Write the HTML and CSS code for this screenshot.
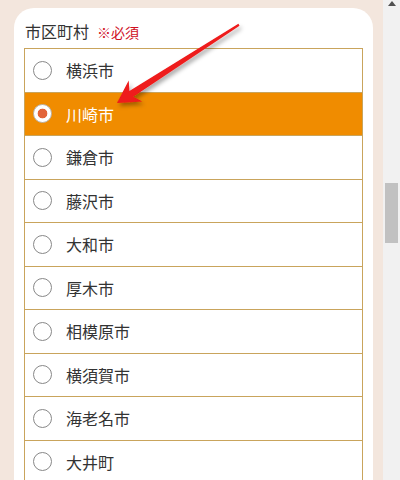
FILE: index.html
```html
<!DOCTYPE html>
<html lang="ja">
<head>
<meta charset="utf-8">
<title>市区町村</title>
<link rel="stylesheet" href="styles.css">
</head>
<body>
<div class="page">
  <main class="content">
    <div class="card">
      <div class="label">市区町村<span class="req">※必須</span></div>
      <ul class="options">
        <li class="option"><span class="radio"></span><span class="name">横浜市</span></li>
        <li class="option selected"><span class="radio checked"></span><span class="name">川崎市</span></li>
        <li class="option"><span class="radio"></span><span class="name">鎌倉市</span></li>
        <li class="option"><span class="radio"></span><span class="name">藤沢市</span></li>
        <li class="option"><span class="radio"></span><span class="name">大和市</span></li>
        <li class="option"><span class="radio"></span><span class="name">厚木市</span></li>
        <li class="option"><span class="radio"></span><span class="name">相模原市</span></li>
        <li class="option"><span class="radio"></span><span class="name">横須賀市</span></li>
        <li class="option"><span class="radio"></span><span class="name">海老名市</span></li>
        <li class="option"><span class="radio"></span><span class="name">大井町</span></li>
      </ul>
    </div>
  </main>
  <div class="scrollbar">
    <div class="scroll-btn"><span class="tri"></span></div>
    <div class="thumb"></div>
  </div>
</div>
<svg class="pointer" width="260" height="130" viewBox="0 0 260 130" xmlns="http://www.w3.org/2000/svg">
  <defs>
    <filter id="sh" x="-20%" y="-20%" width="140%" height="140%">
      <feDropShadow dx="2" dy="3" stdDeviation="2" flood-color="#000" flood-opacity="0.35"/>
    </filter>
  </defs>
  <polygon filter="url(#sh)" fill="#ee1a1a" points="117,103 142.3,101.6 133.2,96.7 239.5,25.8 238.4,23.8 129.4,90.9 128.7,80.6"/>
</svg>
</body>
</html>
```

FILE: styles.css
```css
html, body {
  margin: 0;
  padding: 0;
  height: 480px;
  overflow: hidden;
}

body {
  font-family: "Noto Sans CJK JP", "Noto Sans", sans-serif;
  color: #333;
  position: relative;
}

.page {
  display: flex;
  height: 480px;
}

.content {
  flex: 1;
  background: #f3e6dd;
  padding: 8px 10px 0 14px;
  overflow: hidden;
}

.card {
  background: #fff;
  border-radius: 20px 20px 0 0;
  padding: 12px 10px 0 10px;
  height: 100%;
  box-sizing: border-box;
}

.label {
  font-size: 16px;
  line-height: 22px;
  height: 22px;
  margin-bottom: 6px;
  padding-left: 1px;
  color: #333;
}

.req {
  font-size: 14px;
  color: #d0101f;
  margin-left: 8px;
}

.options {
  list-style: none;
  margin: 0;
  padding: 0;
  border: 1px solid #c9a45c;
  border-bottom: none;
}

.option {
  display: flex;
  align-items: center;
  height: 42.5px;
  border-bottom: 1px solid #c9a45c;
  padding-left: 8px;
  font-size: 16px;
  color: #333;
}

.option.selected {
  background: #f08c00;
  color: #fff;
}

.radio {
  width: 17px;
  height: 17px;
  border: 1px solid #888;
  border-radius: 50%;
  background: #fff;
  flex: none;
  margin-right: 14px;
}

.radio.checked {
  border-color: #b9b9b9;
  background: radial-gradient(circle, #e2643a 0 4.5px, #fff 5.2px);
}

.name {
  line-height: 1;
}

.scrollbar {
  width: 17px;
  flex: none;
  background: #f1f1f1;
  display: flex;
  flex-direction: column;
  align-items: center;
}

.scroll-btn {
  height: 17px;
  width: 17px;
  display: flex;
  justify-content: center;
  padding-top: 1px;
  box-sizing: border-box;
}

.tri {
  width: 0;
  height: 0;
  border-left: 4px solid transparent;
  border-right: 4px solid transparent;
  border-bottom: 5px solid #505050;
}

.thumb {
  margin-top: 166px;
  width: 13px;
  height: 60px;
  background: #c1c1c1;
}

.pointer {
  position: absolute;
  left: 0;
  top: 0;
  pointer-events: none;
}
```
